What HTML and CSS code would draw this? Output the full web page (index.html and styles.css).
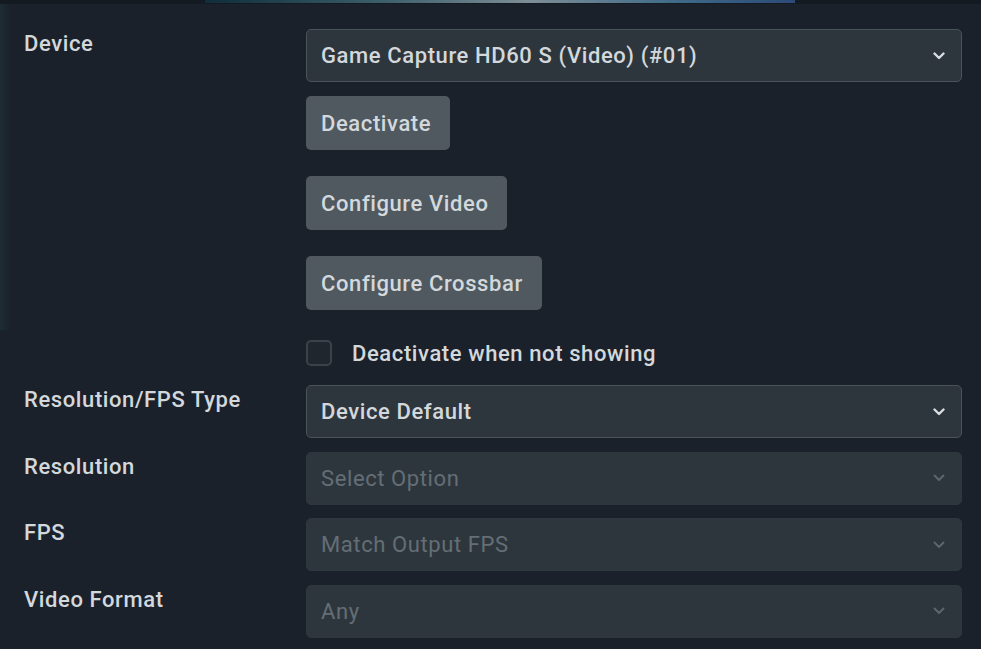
FILE: index.html
```html
<!DOCTYPE html>
<html lang="en">
<head>
    <meta charset="UTF-8">
    <meta name="viewport" content="width=device-width, initial-scale=1.0">
    <title>Video Capture Device Properties</title>
    <link rel="stylesheet" href="styles.css">
</head>
<body>
    <div class="preview-edge"><div class="preview-strip"></div></div>

    <div class="props">
        <!-- Device -->
        <div class="prop-label">Device</div>
        <div class="prop-control stack">
            <div class="select">
                <span>Game Capture HD60 S (Video) (#01)</span>
                <svg class="chevron" viewBox="0 0 12 8"><path d="M1.5 1.5 L6 6 L10.5 1.5"/></svg>
            </div>
            <button class="btn first">Deactivate</button>
            <button class="btn">Configure Video</button>
            <button class="btn">Configure Crossbar</button>
            <label class="check-row">
                <span class="checkbox"></span>
                <span>Deactivate when not showing</span>
            </label>
        </div>

        <!-- Resolution / FPS -->
        <div class="prop-label">Resolution/FPS Type</div>
        <div class="prop-control">
            <div class="select">
                <span>Device Default</span>
                <svg class="chevron" viewBox="0 0 12 8"><path d="M1.5 1.5 L6 6 L10.5 1.5"/></svg>
            </div>
        </div>

        <div class="prop-label">Resolution</div>
        <div class="prop-control">
            <div class="select disabled">
                <span>Select Option</span>
                <svg class="chevron" viewBox="0 0 12 8"><path d="M1.5 1.5 L6 6 L10.5 1.5"/></svg>
            </div>
        </div>

        <div class="prop-label">FPS</div>
        <div class="prop-control">
            <div class="select disabled">
                <span>Match Output FPS</span>
                <svg class="chevron" viewBox="0 0 12 8"><path d="M1.5 1.5 L6 6 L10.5 1.5"/></svg>
            </div>
        </div>

        <div class="prop-label">Video Format</div>
        <div class="prop-control">
            <div class="select disabled">
                <span>Any</span>
                <svg class="chevron" viewBox="0 0 12 8"><path d="M1.5 1.5 L6 6 L10.5 1.5"/></svg>
            </div>
        </div>
    </div>
</body>
</html>
```

FILE: styles.css
```css
/* === PROPERTIES PANEL === */
body {
    margin: 0;
    font-family: Roboto, "Liberation Sans", sans-serif;
    font-size: 22px;
    letter-spacing: 0.6px;
    color: #d3d8dc;
    background-color: #1b212a;
    background-image: linear-gradient(to right, #1d2d35, #1b212a);
    background-size: 10px 330px;
    background-repeat: no-repeat;
    height: 649px;
    overflow: hidden;
}

.preview-edge {
    height: 4px;
    background-color: #141a21;
    padding-left: 205px;
}

.preview-strip {
    width: 590px;
    height: 3px;
    background: linear-gradient(to right, #0f2d3a, #3c5f6c 30%, #7e8e96 55%, #3e6a88 80%, #2c4a78);
}

.props {
    display: grid;
    grid-template-columns: 282px 656px;
    row-gap: 13.5px;
    padding: 25px 0 0 24px;
}

.prop-label {
    line-height: 30px;
    font-weight: 500;
}

.prop-control {
    display: flex;
    flex-direction: column;
    align-items: flex-start;
}

.select {
    width: 100%;
    height: 53px;
    box-sizing: border-box;
    display: flex;
    align-items: center;
    justify-content: space-between;
    padding: 0 16px 0 14px;
    background-color: #2e363d;
    border: 1px solid #4a525a;
    border-radius: 5px;
    font-weight: 500;
}

.select.disabled {
    border-color: #2f373e;
    color: #646e75;
    font-weight: 400;
}

.chevron {
    width: 12px;
    height: 8px;
    fill: none;
    stroke: #d8dde0;
    stroke-width: 2.4;
    stroke-linecap: round;
    stroke-linejoin: round;
}

.disabled .chevron {
    stroke: #5d676e;
    stroke-width: 1.8;
}

.btn {
    height: 54px;
    margin-top: 26px;
    padding: 0 19px 0 15px;
    font-family: inherit;
    font-size: 22px;
    letter-spacing: 0.6px;
    font-weight: 500;
    color: #d3d8dc;
    background-color: #4f595f;
    border: none;
    border-radius: 5px;
}

.btn.first {
    margin-top: 14px;
}

.check-row {
    display: flex;
    align-items: center;
    gap: 20px;
    height: 30px;
    margin-top: 28px;
    margin-bottom: 3.5px;
    font-weight: 500;
}

.checkbox {
    width: 26px;
    height: 26px;
    box-sizing: border-box;
    border: 2px solid #3a434a;
    border-radius: 5px;
    background-color: #1f262e;
}
```
